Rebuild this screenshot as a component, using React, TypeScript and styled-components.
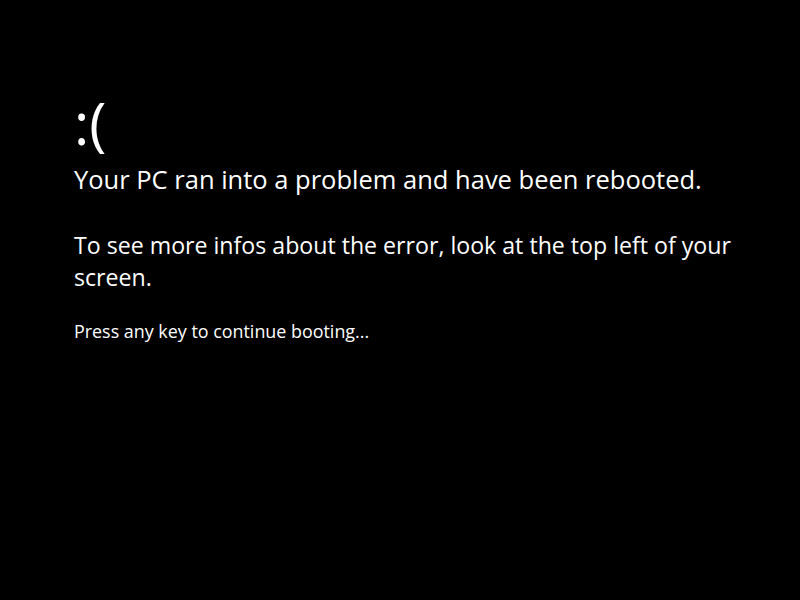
import React from 'react';
import styled, { createGlobalStyle } from 'styled-components';

const GlobalStyle = createGlobalStyle`
  html, body {
    margin: 0;
    padding: 0;
    background: #000;
  }
`;

const Screen = styled.div`
  width: 800px;
  height: 600px;
  box-sizing: border-box;
  background: #000;
  color: #fff;
  font-family: "Open Sans", "Noto Sans", sans-serif;
  padding: 91px 0 0 74px;
  display: flex;
  flex-direction: column;
  align-items: flex-start;
`;

const Face = styled.div`
  font-size: 58px;
  line-height: 64px;
  font-weight: 400;
`;

interface TextProps {
  size: number;
  lineHeight: number;
  top?: number;
}

const Line = styled.p<TextProps>`
  margin: ${({ top }) => top ?? 0}px 0 0 0;
  max-width: 670px;
  font-size: ${({ size }) => size}px;
  line-height: ${({ lineHeight }) => lineHeight}px;
`;

export default function App() {
  return (
    <>
      <GlobalStyle />
      <Screen>
        <Face>:(</Face>
        <Line size={25.5} lineHeight={34} top={7}>
          Your PC ran into a problem and have been rebooted.
        </Line>
        <Line size={23.15} lineHeight={32} top={33}>
          To see more infos about the error, look at the top left of your screen.
        </Line>
        <Line size={17.9} lineHeight={24} top={26}>
          Press any key to continue booting...
        </Line>
      </Screen>
    </>
  );
}
